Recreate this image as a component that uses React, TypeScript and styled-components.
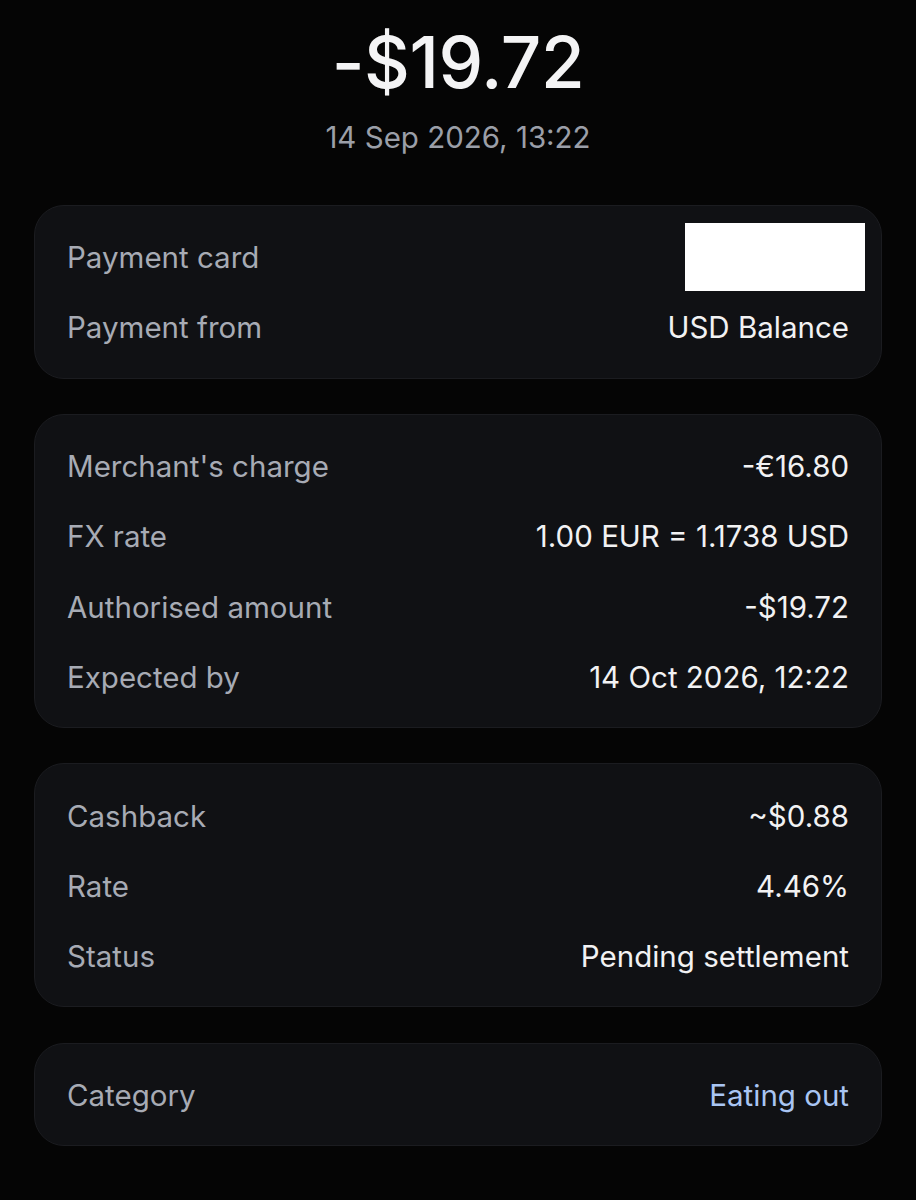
import React from "react";
import styled, { createGlobalStyle } from "styled-components";

const Global = createGlobalStyle`
  html, body { margin: 0; padding: 0; background: #050505; }
  body { font-family: Inter, "Noto Sans", "Liberation Sans", sans-serif; -webkit-font-smoothing: antialiased; }
`;

const Page = styled.div`
  width: 916px;
  min-height: 1200px;
  background: #050505;
  display: flex;
  flex-direction: column;
  align-items: center;
  box-sizing: border-box;
  padding-top: 16px;
`;

const Amount = styled.div`
  font-size: 71px;
  font-weight: 500;
  color: #f4f4f5;
  line-height: 92px;
  letter-spacing: -0.4px;
`;

const DateLine = styled.div`
  font-size: 29.5px;
  color: #9b9fa8;
  line-height: 40px;
  margin-top: 9px;
`;

const Cards = styled.div`
  width: 848px;
  display: flex;
  flex-direction: column;
  gap: 35.3px;
  margin-top: 48px;
`;

const Card = styled.section`
  background: #101114;
  border: 1px solid #1b1c20;
  border-radius: 30px;
  padding: 16px 32px 15px 32px;
  box-sizing: border-box;
`;

const Row = styled.div`
  height: 70.3px;
  display: flex;
  align-items: center;
  justify-content: space-between;
  font-size: 29.5px;
`;

const Label = styled.span`
  color: #a7abb4;
`;

const Value = styled.span<{ $accent?: boolean }>`
  color: ${(p) => (p.$accent ? "#a9c5f3" : "#f2f2f3")};
`;

const Redact = styled.div`
  width: 180px;
  height: 68px;
  background: #ffffff;
  margin-right: -16px;
`;

type Item = { label: string; value?: string; accent?: boolean; redact?: boolean };

const groups: Item[][] = [
  [
    { label: "Payment card", redact: true },
    { label: "Payment from", value: "USD Balance" },
  ],
  [
    { label: "Merchant's charge", value: "-€16.80" },
    { label: "FX rate", value: "1.00 EUR = 1.1738 USD" },
    { label: "Authorised amount", value: "-$19.72" },
    { label: "Expected by", value: "14 Oct 2026, 12:22" },
  ],
  [
    { label: "Cashback", value: "~$0.88" },
    { label: "Rate", value: "4.46%" },
    { label: "Status", value: "Pending settlement" },
  ],
  [{ label: "Category", value: "Eating out", accent: true }],
];

export default function App() {
  return (
    <>
      <Global />
      <Page>
        <Amount>-$19.72</Amount>
        <DateLine>14 Sep 2026, 13:22</DateLine>
        <Cards>
          {groups.map((g, i) => (
            <Card key={i}>
              {g.map((it) => (
                <Row key={it.label}>
                  <Label>{it.label}</Label>
                  {it.redact ? <Redact /> : <Value $accent={it.accent}>{it.value}</Value>}
                </Row>
              ))}
            </Card>
          ))}
        </Cards>
      </Page>
    </>
  );
}
